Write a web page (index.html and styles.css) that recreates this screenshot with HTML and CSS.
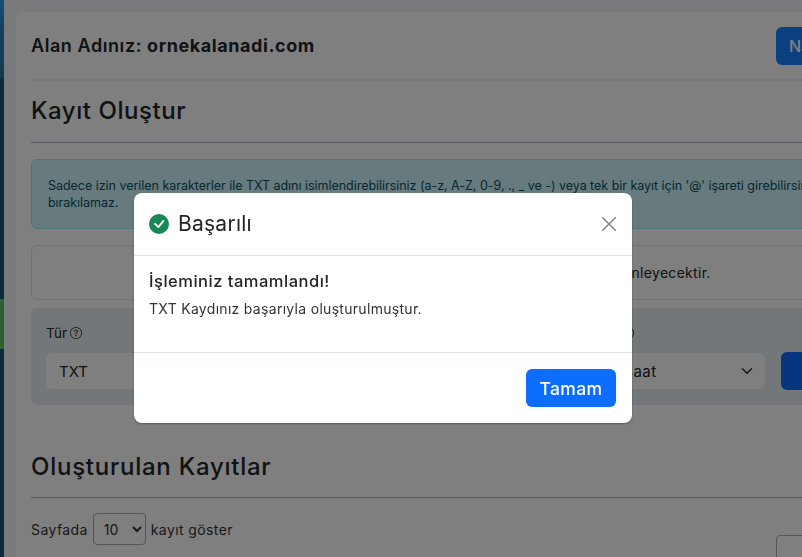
FILE: index.html
```html
<!DOCTYPE html>
<html lang="tr">
<head>
<meta charset="utf-8">
<title>Kayıt Oluştur</title>
<link rel="stylesheet" href="styles.css">
</head>
<body>
<div class="layout">
  <aside class="sidebar"><div class="side-item"></div></aside>
  <main class="main">
    <section class="card">
      <header class="domain-row">
        <h5 class="domain">Alan Adınız: <b>ornekalanadi.com</b></h5>
        <button class="btn btn-head">Nameserver</button>
      </header>
      <h3 class="section-title first">Kayıt Oluştur</h3>
      <div class="alert">Sadece izin verilen karakterler ile TXT adını isimlendirebilirsiniz (a-z, A-Z, 0-9, ., _ ve -) veya tek bir kayıt için '@' işareti girebilirsiniz. Bu alan boş<br>bırakılamaz.</div>
      <div class="note">Bu kayıt, alan adınızın hatalı yönlendirilmesini önleyecektir.</div>
      <form class="record-form">
        <div class="field f-type">
          <label class="field-label">Tür
            <svg class="help" viewBox="0 0 16 16" fill="currentColor"><path d="M8 15A7 7 0 1 1 8 1a7 7 0 0 1 0 14zm0 1A8 8 0 1 0 8 0a8 8 0 0 0 0 16z"/><path d="M5.255 5.786a.237.237 0 0 0 .241.247h.825c.138 0 .248-.113.266-.25.09-.656.54-1.134 1.342-1.134.686 0 1.314.343 1.314 1.168 0 .635-.374.927-.965 1.371-.673.489-1.206 1.06-1.168 1.987l.003.217a.25.25 0 0 0 .25.246h.811a.25.25 0 0 0 .25-.25v-.105c0-.718.273-.927 1.01-1.486.609-.463 1.244-.977 1.244-2.056 0-1.511-1.276-2.241-2.673-2.241-1.267 0-2.655.59-2.75 2.286zm1.557 5.763c0 .533.425.927 1.01.927.609 0 1.028-.394 1.028-.927 0-.552-.42-.94-1.029-.94-.584 0-1.009.388-1.009.94z"/></svg>
          </label>
          <div class="control">TXT</div>
        </div>
        <div class="field f-name">
          <label class="field-label">Ad</label>
          <div class="control"></div>
        </div>
        <div class="field f-ttl">
          <label class="field-label label-ttl">TTL
            <svg class="help" viewBox="0 0 16 16" fill="currentColor"><path d="M8 15A7 7 0 1 1 8 1a7 7 0 0 1 0 14zm0 1A8 8 0 1 0 8 0a8 8 0 0 0 0 16z"/></svg>
          </label>
          <div class="control control-select"><span class="ttl-value">1 Saat</span>
            <svg class="chev" viewBox="0 0 16 16" fill="none" stroke="currentColor" stroke-width="1.8" stroke-linecap="round" stroke-linejoin="round"><path d="m2 5 6 6 6-6"/></svg>
          </div>
        </div>
        <button class="btn btn-add" type="button">Kaydet</button>
      </form>
      <h3 class="section-title second">Oluşturulan Kayıtlar</h3>
      <div class="table-tools">
        <div class="length">Sayfada
          <select class="length-select"><option>10</option></select>
          kayıt göster
        </div>
        <div class="search"></div>
      </div>
    </section>
  </main>
</div>

<div class="backdrop"></div>
<div class="modal-wrap">
  <div class="modal">
    <div class="modal-head">
      <svg class="ok" viewBox="0 0 16 16" fill="currentColor"><path d="M16 8A8 8 0 1 1 0 8a8 8 0 0 1 16 0zm-3.97-3.03a.75.75 0 0 0-1.08.022L7.477 9.417 5.384 7.323a.75.75 0 0 0-1.06 1.06L6.97 11.03a.75.75 0 0 0 1.079-.02l3.992-4.99a.75.75 0 0 0-.01-1.05z"/></svg>
      <span class="modal-title">Başarılı</span>
      <svg class="close" viewBox="0 0 16 16" fill="none" stroke="currentColor" stroke-width="1.6" stroke-linecap="round"><path d="M.8.8l14.4 14.4M15.2.8.8 15.2"/></svg>
    </div>
    <div class="modal-body">
      <h6 class="modal-lead">İşleminiz tamamlandı!</h6>
      <p class="modal-text">TXT Kaydınız başarıyla oluşturulmuştur.</p>
    </div>
    <div class="modal-foot">
      <button class="btn btn-ok" type="button">Tamam</button>
    </div>
  </div>
</div>
</body>
</html>
```

FILE: styles.css
```css
* { box-sizing: border-box; }
html, body { margin: 0; height: 100%; overflow: hidden; }
body {
  font-family: Inter, "Noto Sans", sans-serif;
  color: #212529;
  background: #f1f5f9;
  font-size: 14px;
}
.layout { display: flex; height: 557px; width: 1100px; }
.sidebar {
  width: 4px;
  flex: none;
  height: 100%;
  padding-top: 281px;
  background: linear-gradient(180deg, #2ca0f0 0, #2a7cb6 32px, #28789f 76px, #18547c 80px, #18547c 557px);
}
.side-item { height: 50px; margin-top: 18px; background: #5abe64; }
.main { flex: 1; padding: 12px 12px 0 12px; min-width: 0; }
.card {
  background: #fff;
  border-radius: 6px;
  height: 700px;
  padding: 0 15px;
}
.domain-row {
  display: flex;
  align-items: center;
  height: 69px;
  border-bottom: 2px solid #eceff1;
  width: 1040px;
}
.domain { margin: 0; width: 745px; font-size: 18px; font-weight: 600; letter-spacing: .57px; }
.domain b { font-weight: 700; }
.btn {
  border: 0;
  color: #fff;
  background: #0d6efd;
  font-family: inherit;
  border-radius: 6px;
  font-size: 16px;
  font-weight: 500;
}
.btn-head { background: #1580ff; height: 38px; width: 130px; flex: none; margin-top: 1px; text-align: left; padding: 0 13px; }
.section-title {
  margin: 0;
  font-size: 24px;
  font-weight: 500;
  line-height: 30px;
  border-bottom: 1px solid #adb5bd;
  width: 1040px;
}
.section-title.first { padding: 15px 0 16px; letter-spacing: .55px; }
.section-title.second { padding: 0 0 15px; margin-top: 47px; letter-spacing: .75px; }
.alert {
  margin-top: 16px;
  width: 1040px;
  height: 70px;
  padding: 17px 16px 0;
  background: #cff4fc;
  border: 1px solid #9eeaf9;
  border-radius: 6px;
  color: #055160;
  font-size: 12.5px;
  letter-spacing: -.03px;
  line-height: 17px;
  white-space: nowrap;
}
.note {
  margin-top: 16px;
  width: 1040px;
  height: 55px;
  border: 1px solid #dee2e6;
  border-radius: 6px;
  padding: 17px 0 0 275px;
  font-size: 14px;
  line-height: 20px;
  letter-spacing: .3px;
  white-space: nowrap;
}
.record-form {
  margin-top: 8px;
  width: 1040px;
  height: 97px;
  padding: 15px 15px 0;
  background: #e8eef2;
  border-radius: 6px;
  display: flex;
  gap: 16px;
}
.field-label { display: flex; align-items: center; gap: 3px; height: 20px; font-size: 13.5px; margin-bottom: 10px; }
.label-ttl { gap: 0; font-size: 12.5px; }
.help { width: 12px; height: 12px; }
.f-type { width: 240px; }
.f-name { width: 281px; }
.f-ttl { width: 166px; }
.control {
  height: 36px;
  background: #fff;
  border-radius: 6px;
  padding: 0 13px;
  display: flex;
  align-items: center;
  justify-content: space-between;
  font-size: 15px;
}
.ttl-value { letter-spacing: .5px; }
.chev { width: 12px; height: 12px; margin-right: -1px; }
.btn-add { width: 120px; height: 38px; margin-top: 29px; background: #0d6efd; }
.table-tools {
  display: flex;
  justify-content: space-between;
  width: 1040px;
  margin-top: 16px;
}
.length { display: flex; align-items: center; gap: 5px; height: 32px; margin-top: -1px; font-size: 14px; letter-spacing: .4px; color: #333; }
.length-select {
  font-family: inherit;
  font-size: 14px;
  width: 53px;
  height: 32px;
  padding: 0 4px 0 6px;
  border: 1px solid #aaa;
  border-radius: 4px;
  background: #fff;
  color: #333;
}
.search { width: 295px; height: 32px; margin-top: 21px; border: 1px solid #aaa; border-radius: 4px; }
.backdrop { position: fixed; inset: 0; background: rgba(0, 0, 0, .5); }
.modal-wrap { position: fixed; inset: 0; padding: 193px 0 0 134px; }
.modal {
  width: 498px;
  height: 230px;
  background: #fff;
  border-radius: 8px;
  box-shadow: 0 1px 2px rgba(0, 0, 0, .3);
  display: flex;
  flex-direction: column;
}
.modal-head {
  height: 63px;
  flex: none;
  display: flex;
  align-items: center;
  padding: 0 16px 0 15px;
  border-bottom: 1px solid #dee2e6;
}
.ok { width: 20px; height: 20px; color: #198754; }
.modal-title { flex: 1; margin-left: 9px; font-size: 21px; font-weight: 400; line-height: 30px; letter-spacing: .25px; }
.close { width: 14px; height: 14px; color: #808080; }
.modal-body { height: 97px; flex: none; padding: 14px 15px 0; border-bottom: 1px solid #dee2e6; }
.modal-lead { margin: 0 0 7px; font-size: 16.5px; font-weight: 500; line-height: 22px; letter-spacing: .5px; }
.modal-text { margin: 0; font-size: 14px; line-height: 20px; letter-spacing: .3px; color: #333; }
.modal-foot { flex: 1; display: flex; justify-content: flex-end; align-items: flex-start; padding: 16px 16px 0 0; }
.btn-ok { width: 90px; height: 38px; font-size: 17.5px; letter-spacing: .4px; }
```
